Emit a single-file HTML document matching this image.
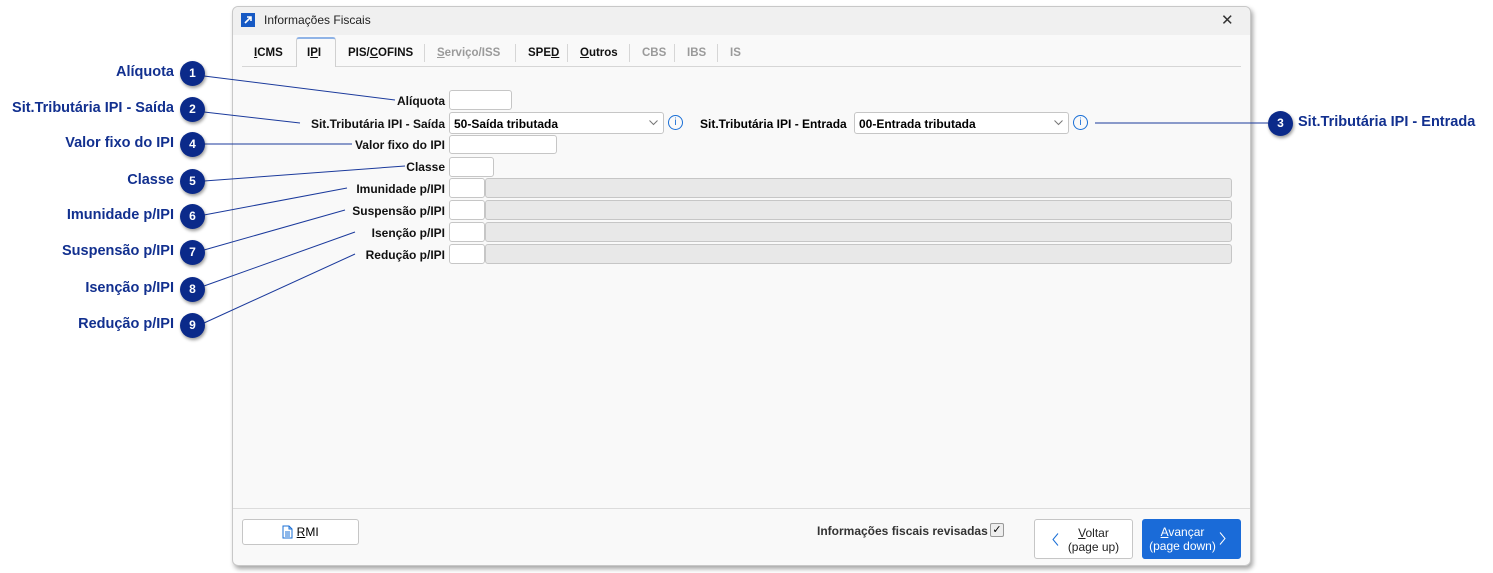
<!DOCTYPE html>
<html><head><meta charset="utf-8"><style>
*{box-sizing:border-box;margin:0;padding:0}
body{width:1493px;height:573px;background:#fff;position:relative;overflow:hidden;font-family:"Liberation Sans",sans-serif;}
.a{position:absolute}
.win{left:232px;top:6px;width:1019px;height:560px;background:#f9f9f9;border:1px solid #c8c8c8;border-radius:6px;box-shadow:2px 3px 5px rgba(0,0,0,.35)}
.title{left:0;top:0;width:1017px;height:28px;background:#f0f0f0;border-radius:6px 6px 0 0}
.tab{top:39px;font-size:11.5px;font-weight:bold;color:#111;height:28px;line-height:28px}
.dis{color:#9a9a9a}
.sep{top:44px;width:1px;height:18px;background:#d6d6d6}
.lbl{font-size:12px;font-weight:bold;color:#111;text-align:right;right:1048px;white-space:nowrap}
.in{background:#fff;border:1px solid #c6c6c6;border-radius:3px}
.gr{background:#e8e8e8;border:1px solid #c6c6c6;border-radius:3px}
.co{font-size:14.5px;font-weight:bold;color:#12308f;text-align:right;right:1319px;white-space:nowrap}
.ci{width:25px;height:25px;border-radius:50%;background:#0b2a8a;color:#fff;font-size:12px;font-weight:bold;text-align:center;line-height:25px;box-shadow:1px 2px 3px rgba(0,0,0,.4)}
</style></head><body>
<div class="a win">
 <div class="a title"></div>
</div>
<div class="a" style="left:241px;top:13px;width:14px;height:14px;background:#1659c4"><svg width="14" height="14"><path d="M4 10 L10 4 M6 4 H10 V8" stroke="#fff" stroke-width="1.6" fill="none"/></svg></div>
<div class="a" style="left:264px;top:13px;font-size:12px;color:#222">Informações Fiscais</div>
<div class="a" style="left:1221px;top:11px;font-size:15px;color:#333">✕</div>
<div class="a" style="left:242px;top:66px;width:999px;height:1px;background:#d6d6d6"></div>
<div class="a" style="left:296px;top:37px;width:40px;height:30px;background:#f9f9f9;border:1px solid #d0d0d0;border-bottom:none;border-top:2px solid #8fb3e6;border-radius:3px 3px 0 0"></div>
<div class="a tab" style="left:254px"><u>I</u>CMS</div>
<div class="a tab" style="left:307px">I<u>P</u>I</div>
<div class="a tab" style="left:348px">PIS/<u>C</u>OFINS</div>
<div class="a sep" style="left:424px"></div>
<div class="a tab dis" style="left:437px"><u>S</u>erviço/ISS</div>
<div class="a sep" style="left:515px"></div>
<div class="a tab" style="left:528px">SPE<u>D</u></div>
<div class="a sep" style="left:567px"></div>
<div class="a tab" style="left:580px"><u>O</u>utros</div>
<div class="a sep" style="left:629px"></div>
<div class="a tab dis" style="left:642px">CBS</div>
<div class="a sep" style="left:674px"></div>
<div class="a tab dis" style="left:687px">IBS</div>
<div class="a sep" style="left:717px"></div>
<div class="a tab dis" style="left:730px">IS</div>

<div class="a lbl" style="top:94px">Alíquota</div>
<div class="a in" style="left:449px;top:90px;width:63px;height:20px"></div>
<div class="a lbl" style="top:117px">Sit.Tributária IPI - Saída</div>
<div class="a in" style="left:449px;top:112px;width:215px;height:22px;font-size:12px;font-weight:bold;padding:4px 0 0 4px">50-Saída tributada<svg class="a" style="right:5px;top:7px" width="9" height="6"><path d="M0.5 0.5 L4.5 4.5 L8.5 0.5" stroke="#777" fill="none"/></svg></div>
<div class="a" style="left:668px;top:115px;width:15px;height:15px;border:1.3px solid #1a6fd6;border-radius:50%;color:#1a6fd6;font-size:10px;text-align:center;line-height:13px">i</div>
<div class="a" style="left:700px;top:117px;font-size:12px;font-weight:bold">Sit.Tributária IPI - Entrada</div>
<div class="a in" style="left:854px;top:112px;width:215px;height:22px;font-size:12px;font-weight:bold;padding:4px 0 0 4px">00-Entrada tributada<svg class="a" style="right:5px;top:7px" width="9" height="6"><path d="M0.5 0.5 L4.5 4.5 L8.5 0.5" stroke="#777" fill="none"/></svg></div>
<div class="a" style="left:1073px;top:115px;width:15px;height:15px;border:1.3px solid #1a6fd6;border-radius:50%;color:#1a6fd6;font-size:10px;text-align:center;line-height:13px">i</div>
<div class="a lbl" style="top:138px">Valor fixo do IPI</div>
<div class="a in" style="left:449px;top:135px;width:108px;height:19px"></div>
<div class="a lbl" style="top:160px">Classe</div>
<div class="a in" style="left:449px;top:157px;width:45px;height:20px"></div>
<div class="a lbl" style="top:182px">Imunidade p/IPI</div>
<div class="a in" style="left:449px;top:178px;width:36px;height:20px"></div><div class="a gr" style="left:485px;top:178px;width:747px;height:20px"></div>
<div class="a lbl" style="top:204px">Suspensão p/IPI</div>
<div class="a in" style="left:449px;top:200px;width:36px;height:20px"></div><div class="a gr" style="left:485px;top:200px;width:747px;height:20px"></div>
<div class="a lbl" style="top:226px">Isenção p/IPI</div>
<div class="a in" style="left:449px;top:222px;width:36px;height:20px"></div><div class="a gr" style="left:485px;top:222px;width:747px;height:20px"></div>
<div class="a lbl" style="top:248px">Redução p/IPI</div>
<div class="a in" style="left:449px;top:244px;width:36px;height:20px"></div><div class="a gr" style="left:485px;top:244px;width:747px;height:20px"></div>

<div class="a" style="left:233px;top:508px;width:1017px;height:1px;background:#dcdcdc"></div>
<div class="a" style="left:242px;top:519px;width:117px;height:26px;background:#fff;border:1px solid #c6c6c6;border-radius:3px;font-size:12px;text-align:center;line-height:24px"><svg style="vertical-align:-3px" width="11" height="14"><path d="M1 1 H7 L10 4 V13 H1 Z M7 1 V4 H10 M3 7 H8 M3 9 H8 M3 11 H8" stroke="#1a6fd6" fill="none"/></svg> <u>R</u>MI</div>
<div class="a" style="left:817px;top:524px;font-size:12px;font-weight:bold;color:#333">Informações fiscais revisadas</div>
<div class="a" style="left:990px;top:523px;width:14px;height:14px;border:1px solid #999;border-radius:2px;background:#eee;font-size:11px;line-height:12px;text-align:center">✓</div>
<div class="a" style="left:1034px;top:519px;width:99px;height:40px;background:#fff;border:1px solid #c6c6c6;border-radius:3px;font-size:12px;text-align:center;padding:6px 0 0 20px;line-height:14px;color:#222"><u>V</u>oltar<br>(page up)<svg class="a" style="left:17px;top:13px" width="7" height="13"><path d="M6 0.5 L1 6.5 L6 12.5" stroke="#1a6fd6" fill="none"/></svg></div>
<div class="a" style="left:1142px;top:519px;width:99px;height:40px;background:#1a6bd8;border-radius:3px;font-size:12px;text-align:center;padding:6px 18px 0 0;line-height:14px;color:#fff"><u>A</u>vançar<br>(page down)<svg class="a" style="right:15px;top:13px" width="7" height="13"><path d="M1 0.5 L6 6.5 L1 12.5" stroke="#fff" fill="none"/></svg></div>

<svg class="a" style="left:0;top:0" width="1493" height="573"><g stroke="#1b3a9c" stroke-width="1" fill="none">
<path d="M204 76 L395 100"/><path d="M204 112 L300 123"/><path d="M204 144 L352 144"/><path d="M204 181 L405 166"/><path d="M204 215 L347 188"/><path d="M204 250 L345 210"/><path d="M204 286 L355 232"/><path d="M204 323 L355 254"/><path d="M1095 123 L1268 123"/></g></svg>
<div class="a co" style="top:64px">Alíquota</div><div class="a ci" style="left:180px;top:61px">1</div>
<div class="a co" style="top:100px">Sit.Tributária IPI - Saída</div><div class="a ci" style="left:180px;top:97px">2</div>
<div class="a co" style="top:135px">Valor fixo do IPI</div><div class="a ci" style="left:180px;top:132px">4</div>
<div class="a co" style="top:172px">Classe</div><div class="a ci" style="left:180px;top:169px">5</div>
<div class="a co" style="top:207px">Imunidade p/IPI</div><div class="a ci" style="left:180px;top:204px">6</div>
<div class="a co" style="top:243px">Suspensão p/IPI</div><div class="a ci" style="left:180px;top:240px">7</div>
<div class="a co" style="top:280px">Isenção p/IPI</div><div class="a ci" style="left:180px;top:277px">8</div>
<div class="a co" style="top:316px">Redução p/IPI</div><div class="a ci" style="left:180px;top:313px">9</div>
<div class="a ci" style="left:1268px;top:111px">3</div>
<div class="a" style="left:1298px;top:114px;font-size:14.5px;font-weight:bold;color:#12308f">Sit.Tributária IPI - Entrada</div>
</body></html>
